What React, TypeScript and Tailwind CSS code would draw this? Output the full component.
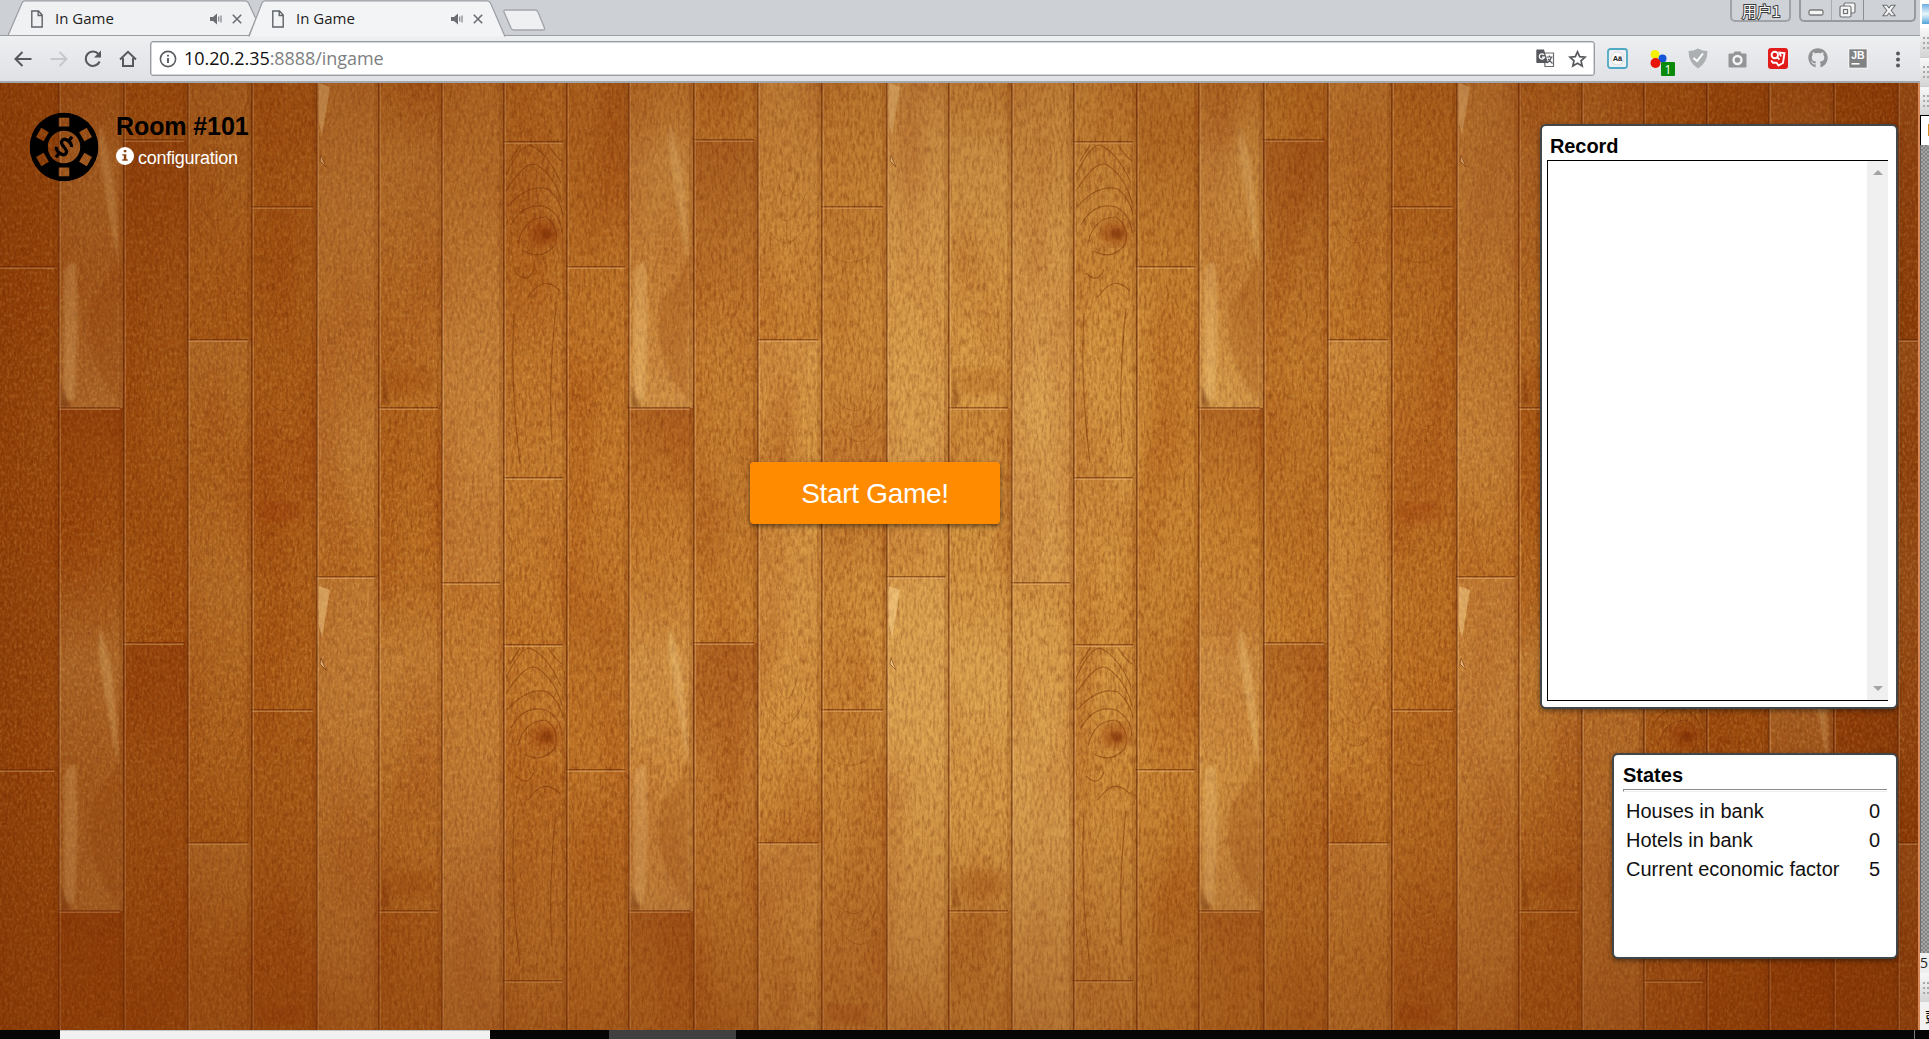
import React from "react";
import { FaGithub } from "react-icons/fa";

const SANS = "font-['Liberation_Sans',Arial,sans-serif]";
const UI = "font-['Open_Sans','Noto_Sans','Noto_Sans_CJK_SC',sans-serif]";

/* One repeat of the parquet is 570 x 503: nine boards, each with its end joints.
   Tones run from a board's top end to its bottom end, as [colour, opacity] stops. */
type Stop = [string, number];
const BOARDS: { x: number; w: number; joints: number[]; stops: Stop[] }[] = [
  { x: 0, w: 65, joints: [325], stops: [["#7a2400", 0.3], ["#9a4000", 0.1], ["#ffe6a0", 0.18], ["#ffe0a0", 0.1], ["#ffe6a0", 0.2]] },
  { x: 65, w: 64, joints: [57], stops: [["#7a2400", 0.26], ["#7a2400", 0.12], ["#8a3400", 0.1], ["#8a3400", 0.16], ["#b05400", 0.06]] },
  { x: 129, w: 64, joints: [257], stops: [["#ffe0a0", 0.12], ["#ffd890", 0.04], ["#ffd890", 0.12], ["#ffd890", 0.06], ["#a04400", 0.06]] },
  { x: 193, w: 65, joints: [124], stops: [["#8a3400", 0.12], ["#8a3400", 0.1], ["#8a2400", 0.14], ["#8a3400", 0.06], ["#a04400", 0.06]] },
  { x: 258, w: 62, joints: [494], stops: [["#ffe0a0", 0.14], ["#ffe0a0", 0.16], ["#ffe0a0", 0.1], ["#ffe0a0", 0.14], ["#ffd080", 0.06]] },
  { x: 320, w: 63, joints: [325], stops: [["#8a3400", 0.14], ["#8a3400", 0.04], ["#ffe6a0", 0.14], ["#ffe6a0", 0.06], ["#ffe6a0", 0.02]] },
  { x: 383, w: 62, joints: [500], stops: [["#ffe2a8", 0.06], ["#ffe2a8", 0.1], ["#ffe2a8", 0.14], ["#ffe2a8", 0.14], ["#ffe2a8", 0.12]] },
  { x: 445, w: 63, joints: [59], stops: [["#ffe2a8", 0.02], ["#a04400", 0.06], ["#ffe2a8", 0.04], ["#ffe2a8", 0.04], ["#a04400", 0.04]] },
  { x: 508, w: 62, joints: [184], stops: [["#a04400", 0.06], ["#a04400", 0.1], ["#a04400", 0.08], ["#8a3400", 0.14], ["#a04400", 0.1]] },
];

function WoodFloor() {
  return (
    <svg className="absolute inset-0 h-full w-full" viewBox="0 0 1920 947" preserveAspectRatio="none">
      <defs>
        <linearGradient id="tone" x1="0" x2="1" y1="0" y2="0">
          <stop offset="0" stopColor="#95460b" />
          <stop offset=".04" stopColor="#a35210" />
          <stop offset=".12" stopColor="#af6118" />
          <stop offset=".25" stopColor="#bd7124" />
          <stop offset=".36" stopColor="#c98232" />
          <stop offset=".46" stopColor="#d49540" />
          <stop offset=".54" stopColor="#d59843" />
          <stop offset=".62" stopColor="#cc8935" />
          <stop offset=".74" stopColor="#bf7526" />
          <stop offset=".86" stopColor="#ab5b15" />
          <stop offset=".95" stopColor="#9a490c" />
          <stop offset="1" stopColor="#8f3f08" />
        </linearGradient>
        <radialGradient id="edge" cx=".5" cy=".5" r=".62">
          <stop offset=".45" stopColor="#6a2400" stopOpacity="0" />
          <stop offset="1" stopColor="#6a2400" stopOpacity=".25" />
        </radialGradient>
        <linearGradient id="ends" x1="0" x2="0" y1="0" y2="1">
          <stop offset="0" stopColor="#7a2c00" stopOpacity=".1" />
          <stop offset=".3" stopColor="#7a2c00" stopOpacity="0" />
          <stop offset=".7" stopColor="#7a2c00" stopOpacity="0" />
          <stop offset="1" stopColor="#7a2c00" stopOpacity=".24" />
        </linearGradient>
        {BOARDS.map((b, i) => (
          <linearGradient key={b.x} id={`board${i}`} x1="0" x2="0" y1="0" y2="1">
            {b.stops.map(([color, alpha], k) => (
              <stop key={k} offset={k / 4} stopColor={color} stopOpacity={alpha} />
            ))}
          </linearGradient>
        ))}
        <filter id="grain" x="0" y="0" width="1" height="1" colorInterpolationFilters="sRGB">
          <feTurbulence type="fractalNoise" baseFrequency=".36 .11" numOctaves="3" seed="4" />
          <feColorMatrix values="0 0 0 0 .42  0 0 0 0 .14  0 0 0 0 0  1.3 0 0 0 -.5" />
        </filter>
        <filter id="flecks" x="0" y="0" width="1" height="1" colorInterpolationFilters="sRGB">
          <feTurbulence type="fractalNoise" baseFrequency=".4 .26" numOctaves="2" seed="21" />
          <feColorMatrix values="0 0 0 0 1  0 0 0 0 .82  0 0 0 0 .45  0 1.3 0 0 -.56" />
        </filter>
        <filter id="clouds" x="0" y="0" width="1" height="1" colorInterpolationFilters="sRGB">
          <feTurbulence type="fractalNoise" baseFrequency=".02 .006" numOctaves="2" seed="9" />
          <feColorMatrix values="0 0 0 0 .58  0 0 0 0 .2  0 0 0 0 0  1.6 0 0 0 -.7" />
        </filter>
        <filter id="soft"><feGaussianBlur stdDeviation="6" /></filter>
        <filter id="blur2"><feGaussianBlur stdDeviation="1.6" /></filter>
        <pattern id="boards" x="58" y="0" width="570" height="503" patternUnits="userSpaceOnUse">
          {BOARDS.map((b, i) => (
            <g key={b.x}>
              <rect x={b.x} y={b.joints[0] - 503} width={b.w} height="503" fill={`url(#board${i})`} />
              <rect x={b.x} y={b.joints[0]} width={b.w} height="503" fill={`url(#board${i})`} />
              {(i === 7 ? [59, 395] : b.joints).map((j) => (
                <g key={j}>
                  <rect x={b.x} y={j - 1} width={b.w - 3} height="1.5" fill="#5a1e00" opacity=".5" />
                  <rect x={b.x} y={j + 0.5} width={b.w - 3} height="1.5" fill="#f0b878" opacity=".45" />
                </g>
              ))}
              <rect x={b.x} y="0" width="1.6" height="503" fill="#5c2000" opacity=".6" />
              <rect x={b.x + 1.6} y="0" width="1.4" height="503" fill="#f5c490" opacity=".3" />
              <rect x={b.x + b.w - 4} y="0" width="4" height="503" fill="#6a2800" opacity=".16" />
            </g>
          ))}
          <g filter="url(#blur2)">
            <path d="M6 315V190Q8 178 18 180Q22 240 16 318Z" fill="#ffdc90" opacity=".28" />
            <path d="M60 318Q20 270 34 215Q62 190 60 150Z" fill="#8a3200" opacity=".22" />
            <path d="M42 40Q60 90 60 180Q48 120 40 60Z" fill="#ffdf98" opacity=".26" />
          </g>
          <path d="M261 496V503M261 0L272 4L264 52L261 40Z" fill="#ffdc98" opacity=".45" />
          <path d="M263 72L268 84L262 78Z" fill="#ffe0a8" opacity=".6" stroke="#6a2800" strokeWidth=".8" />
          <g fill="none" stroke="#6a2600" strokeWidth="1.200" opacity=".45">
            <path d="M448 92Q462 62 472 62Q490 70 503 100M448 108Q470 72 482 84Q498 96 504 120M449 124Q470 100 490 106Q502 116 505 132M453 142Q466 118 488 124Q503 132 504 150M460 160Q466 134 488 134Q502 144 497 162Q484 178 466 168" />
            <path d="M452 78L462 62M490 62Q498 74 504 78M458 190Q470 202 476 186M470 214Q486 190 502 208M456 230Q452 300 462 380M498 225Q490 300 494 360" />
          </g>
          <ellipse cx="487" cy="150" rx="14" ry="12" fill="#8a2c00" opacity=".5" filter="url(#soft)" />
          <ellipse cx="489" cy="151" rx="6" ry="5" fill="#6a2000" opacity=".4" filter="url(#blur2)" />
          <g fill="none" stroke="#6a2600" strokeWidth=".9" opacity=".28">
            <path d="M200 170Q222 190 246 168M202 310Q232 350 248 300M206 326Q232 364 250 320M212 344Q232 374 252 342" />
            <path d="M136 140Q160 185 184 130M142 120Q160 160 178 110M150 100Q160 130 170 90" />
          </g>
          <path d="M324 322V280L332 320Z" fill="#6a2200" opacity=".35" filter="url(#blur2)" />
          <path d="M3 324V300L12 324Z" fill="#5a1a00" opacity=".4" filter="url(#blur2)" />
          <rect x="330" y="285" width="46" height="26" fill="#8a3000" opacity=".22" filter="url(#soft)" />
          <rect x="200" y="420" width="42" height="18" fill="#8a1f00" opacity=".22" filter="url(#soft)" />
        </pattern>
      </defs>
      <rect width="1920" height="947" fill="url(#tone)" />
      <rect width="1920" height="947" filter="url(#clouds)" opacity=".5" />
      <rect width="1920" height="947" filter="url(#grain)" opacity=".7" />
      <rect width="1920" height="947" filter="url(#flecks)" opacity=".5" />
      <rect width="1920" height="947" fill="url(#boards)" />
      <rect width="1920" height="947" fill="url(#edge)" />
      <rect width="1920" height="947" fill="url(#ends)" />
      <rect x="1918" width="2" height="947" fill="#d98a5c" />
    </svg>
  );
}

function Tab({ width, path, fill }: { width: number; path: string; fill: string }) {
  return (
    <div className="relative h-9 shrink-0" style={{ width }}>
      <svg className="absolute left-0 top-0 overflow-visible" width={width} height="36">
        <path d={path} fill={fill} stroke="#9a9da2" strokeWidth="1.2" />
      </svg>
      <div className="relative flex h-9 items-center pl-[23px] pt-[2px]">
        <svg width="12" height="18" viewBox="0 0 12 18" fill="none" stroke="#5f6368" strokeWidth="1.4">
          <path d="M.8 1H7.5L11.2 5V17H.8ZM7.2 1V5.5H11" />
        </svg>
        <span className="-mt-[2px] ml-[12px] w-[154px] text-[15px] leading-5 text-[#222]">In Game</span>
        <svg className="ml-px" width="12" height="12" viewBox="0 0 12 12" fill="#6a6d71">
          <path d="M0 4H3L7 .5V11.500L3 8H0ZM8.300 3.500H9.300V8.500H8.300ZM10.500 2.500H11.500V9.500H10.500Z" />
        </svg>
        <svg className="ml-[10px]" width="10" height="10" viewBox="0 0 10 10" stroke="#6a6d71" strokeWidth="1.6">
          <path d="M.8 .8L9.200 9.200M9.200 .8L.8 9.200" />
        </svg>
      </div>
    </div>
  );
}

function TabStrip() {
  return (
    <div className="flex h-9 items-start border-b border-[#9a9da2] bg-[#cdd0d5]">
      <div className="w-2 shrink-0" />
      <Tab width={241} fill="#f0f1f3" path="M0 35.500L14 3Q15 .8 17 .8H237Q239.500 .8 240.500 3L248 19L241 35.500Z" />
      <div className="z-10 -mr-4 flex">
        <Tab width={257} fill="#f3f4f5" path="M0 36.500L13 3Q14 .8 16 .8H238Q240.500 .8 241.500 3L256 36.500" />
      </div>
      <svg className="ml-[13px] mt-[9px] shrink-0" width="43" height="22" viewBox="0 0 43 22">
        <path d="M2.500 1H32Q34 1 35 3L41.500 19Q42 21 40 21H11Q9 21 8 19L1 3Q.5 1 2.500 1Z" fill="#eff0f2" stroke="#a3a6ab" strokeWidth="1.400" />
      </svg>
      <div className="ml-auto mr-[4px] flex items-start">
        <div className="relative mr-2 flex h-[22px] w-[61px] items-center justify-center rounded-b-[5px] border-2 border-t-0 border-[#a0a3a8] bg-[#cfd2d6]">
          <svg width="38" height="20" className="overflow-visible">
            <text x="0" y="17" className="font-['Noto_Sans_CJK_SC',sans-serif] text-[15px]" fill="#fff" stroke="#3c3c3c" strokeWidth="2" paintOrder="stroke">用户1</text>
          </svg>
        </div>
        <div className="flex h-[22px] w-[117px] rounded-b-[5px] border-2 border-t-0 border-[#979a9f] bg-[#cfd2d6]">
          <div className="flex w-[31px] items-center justify-center border-r border-[#a9acb0] pt-1">
            <svg width="16" height="7"><rect x="1" y="1" width="14" height="5" rx="1.500" fill="#f5f5f5" stroke="#77797c" strokeWidth="1.300" /></svg>
          </div>
          <div className="flex w-[32px] items-center justify-center border-r border-[#8b8e92]">
            <svg width="17" height="16" fill="#f5f5f5" stroke="#707275" strokeWidth="1.200">
              <rect x="5" y="1" width="11" height="10" rx="1.500" />
              <rect x="1" y="4" width="11" height="11" rx="1.500" />
              <rect x="4.500" y="7.500" width="4" height="4" />
            </svg>
          </div>
          <div className="flex flex-1 items-center justify-center">
            <svg width="14" height="13" viewBox="0 0 16 14">
              <path d="M1 1H5.500L8 4L10.500 1H15L10.500 7L15 13H10.500L8 10L5.500 13H1L5.500 7Z" fill="#f5f5f5" stroke="#707275" strokeWidth="1.200" />
            </svg>
          </div>
        </div>
      </div>
    </div>
  );
}

function Extensions() {
  return (
    <>
      <svg className="absolute left-[1607px] top-[12px]" width="21" height="21">
        <rect x="1" y="1" width="19" height="19" rx="2.500" fill="#eef1f3" stroke="#4fa9c4" strokeWidth="1.800" />
        <circle cx="10.500" cy="10.500" r="6.500" fill="#fafafa" stroke="#ddd" />
        <text x="10.500" y="13.300" textAnchor="middle" className="font-['Liberation_Sans',sans-serif] text-[7.500px] font-bold" fill="#222">Aä</text>
      </svg>
      <svg className="absolute left-[1649px] top-[13px]" width="28" height="28">
        <circle cx="6" cy="5.500" r="4.500" fill="#f3f000" />
        <circle cx="13.500" cy="9.500" r="4" fill="#1553d8" />
        <circle cx="6.500" cy="14" r="5" fill="#e81505" />
        <rect x="12" y="13" width="14" height="14" rx="1" fill="#0a8a0a" />
        <text x="19" y="24.500" textAnchor="middle" className="font-['Open_Sans',sans-serif] text-[12px]" fill="#fff">1</text>
      </svg>
      <svg className="absolute left-[1688px] top-[12px]" width="20" height="21" viewBox="0 0 20 21">
        <path d="M10 .5Q14.500 3 19.500 3Q19.500 15 10 20.500Q.5 15 .5 3Q5.500 3 10 .5Z" fill="#adb0b2" />
        <path d="M5.500 10L9 13L15 5.500" fill="none" stroke="#fff" strokeWidth="2" />
      </svg>
      <svg className="absolute left-[1728px] top-[15px]" width="19" height="17" viewBox="0 0 19 17">
        <path d="M1.500 2.500H5.500L6.500 .5H12.500L13.500 2.500H17.500Q18.500 2.500 18.500 3.500V15.500Q18.500 16.500 17.500 16.500H1.500Q.5 16.500 .5 15.500V3.500Q.5 2.500 1.500 2.500Z" fill="#939597" />
        <circle cx="9.500" cy="9" r="4" fill="#939597" stroke="#f4f4f4" strokeWidth="2.400" />
      </svg>
      <svg className="absolute left-[1768px] top-[12px]" width="20" height="21" viewBox="0 0 20 21">
        <rect width="20" height="21" rx="3" fill="#e21b1b" />
        <g fill="none" stroke="#fff" strokeWidth="1.900">
          <circle cx="6.800" cy="7" r="3.200" />
          <path d="M9 9L11.500 11.500M3.200 12.500L5 14.800L8.500 14.800L10.500 17.500L15 15L16.500 5L11.500 4.500L13 8.500" />
        </g>
      </svg>
      <FaGithub className="absolute left-[1808px] top-[12px] h-5 w-5 text-[#909294]" />
      <svg className="absolute left-[1848px] top-[12px]" width="20" height="21" viewBox="0 0 20 21">
        <rect x=".7" y=".7" width="18.600" height="19.600" fill="#808284" stroke="#f4f4f4" strokeWidth="1.200" />
        <text x="10" y="11" textAnchor="middle" className="font-['Liberation_Sans',sans-serif] text-[10.500px] font-bold" fill="#fff">JB</text>
        <rect x="3.500" y="15" width="8" height="1.600" fill="#fff" />
      </svg>
      <svg className="absolute left-[1895px] top-[15px]" width="6" height="18" fill="#55585c">
        <circle cx="3" cy="2.500" r="2" /><circle cx="3" cy="8.500" r="2" /><circle cx="3" cy="14.500" r="2" />
      </svg>
    </>
  );
}

function Toolbar() {
  return (
    <div className="relative flex h-[47px] items-center border-b-2 border-[#a3a8ae] bg-linear-to-b from-[#eeeff1] to-[#dfe1e5]">
      <svg className="ml-[14px]" width="18" height="16" fill="none" stroke="#55585c" strokeWidth="2">
        <path d="M17.500 8H1.800M8.500 1L1.500 8L8.500 15" />
      </svg>
      <svg className="ml-[18px]" width="18" height="16" fill="none" stroke="#c6c8cb" strokeWidth="2">
        <path d="M.5 8H16.200M9.500 1L16.500 8L9.500 15" />
      </svg>
      <svg className="ml-[16px]" width="18" height="18" fill="none" stroke="#55585c" strokeWidth="2.100">
        <path d="M14.500 4.200A7.200 7.200 0 1 0 15.600 11.500" />
        <path d="M17 .5V7.500H10Z" fill="#55585c" stroke="none" />
      </svg>
      <svg className="ml-[17px]" width="18" height="18" fill="none" stroke="#55585c" strokeWidth="2">
        <path d="M1 9.500L9 1.800L17 9.500M4 8V16H14V8" />
      </svg>
      <div className="relative ml-[13px] flex h-[35px] w-[1445px] items-center rounded-[3px] border border-[#999ca0] bg-white shadow-[inset_0_0_0_0.500px_#a8abb0]">
        <svg className="ml-[8px]" width="18" height="18" fill="none" stroke="#5a5d61">
          <circle cx="9" cy="9" r="7.600" strokeWidth="1.600" />
          <path d="M9 8V13M9 4.800V6.600" strokeWidth="1.900" />
        </svg>
        <span className="-mt-px ml-[7px] text-[18px] leading-6 tracking-[-0.060px] text-[#111]">
          10.20.2.35<span className="text-[#7d7f82]">:8888/ingame</span>
        </span>
        <svg className="ml-auto" width="19" height="19" viewBox="0 0 19 19">
          <path d="M8 4H17.500V17.500H9Z" fill="#fff" stroke="#6a6d71" strokeWidth="1.200" />
          <path d="M1 .5H8L12 14H1Q.3 14 .3 13V1.500Q.3 .5 1 .5Z" fill="#55585c" />
          <path d="M8 5.800A2.600 2.600 0 1 0 8.400 8.200H6" fill="none" stroke="#fff" strokeWidth="1.300" />
          <path d="M10.500 8H16.500M13.500 6.500V8M15.500 8Q14.500 12 11 14M12 10L16.500 14.500" fill="none" stroke="#55585c" strokeWidth="1.200" />
        </svg>
        <svg className="ml-[13px] mr-[7px]" width="19" height="18" viewBox="0 0 19 18">
          <path d="M9.500 1.800L11.700 6.700L17 7.200L13 10.800L14.200 16L9.500 13.300L4.800 16L6 10.800L2 7.200L7.300 6.700Z" fill="none" stroke="#55585c" strokeWidth="1.700" />
        </svg>
      </div>
      <Extensions />
    </div>
  );
}

function PokerChip() {
  return (
    <svg width="70" height="70" viewBox="-35 -35 70 70">
      <defs>
        <mask id="chip">
          <circle r="34.500" fill="#fff" />
          {[0, 60, 120, 180, 240, 300].map((a) => (
            <rect key={a} x="-5.300" y="-29.300" width="10.600" height="8.800" fill="#000" transform={`rotate(${a})`} />
          ))}
          <circle r="16.200" fill="#000" />
        </mask>
      </defs>
      <circle r="34.500" mask="url(#chip)" />
      <g transform="rotate(38)" fill="none" stroke="#000" strokeWidth="3.300">
        <path d="M5.800 -4.500Q4 -7.500 0 -7.500Q-5.500 -7.500 -5.500 -4Q-5.500 -.8 0 0Q5.500 1 5.500 4Q5.500 7.500 0 7.500Q-4.500 7.500 -6 4.500M0 -13V-7.500M0 7.500V13" />
      </g>
    </svg>
  );
}

function RecordPanel() {
  return (
    <section className="h-[585px] w-[358px] rounded-[6px] border-2 border-[#424648] bg-white pl-[5px] pt-[6px] shadow-[0_2px_5px_rgba(0,0,0,0.450)]">
      <h2 className="h-[28px] pl-[3px] pt-px text-[20px] font-bold leading-[26px] tracking-[-0.100px] text-black">Record</h2>
      <div className="flex h-[541px] w-[341px] justify-end border-y border-l border-black">
        <div className="flex w-[21px] flex-col items-center justify-between bg-[#f0f0f0] py-[9px]">
          <svg width="10" height="5"><path d="M0 5L5 0L10 5Z" fill="#a3a3a3" /></svg>
          <svg width="10" height="5"><path d="M0 0H10L5 5Z" fill="#a3a3a3" /></svg>
        </div>
      </div>
    </section>
  );
}

const STATES: [string, number][] = [
  ["Houses in bank", 0],
  ["Hotels in bank", 0],
  ["Current economic factor", 5],
];

function StatesPanel() {
  return (
    <section className="mt-[44px] h-[206px] w-[286px] rounded-[6px] border-2 border-[#424648] bg-white px-[9px] pt-[7px] shadow-[0_2px_5px_rgba(0,0,0,0.450)]">
      <h2 className="h-[27px] text-[20px] font-bold leading-[26px] text-black">States</h2>
      <div className="mb-[4px] h-[3px] border-b border-l border-t border-b-[#eee] border-l-[#8d8d8d] border-t-[#8d8d8d]" />
      {STATES.map(([label, value]) => (
        <div key={label} className="flex h-[29px] items-center justify-between pl-[3px] pr-[7px] text-[20px] text-[#111]">
          <span>{label}</span>
          <span>{value}</span>
        </div>
      ))}
    </section>
  );
}

function Game() {
  return (
    <main className={`relative h-[947px] overflow-hidden ${SANS}`}>
      <WoodFloor />
      <div className="relative flex h-full">
        <header className="flex h-fit w-[750px] items-start pl-[28.500px] pt-[28.500px]">
          <PokerChip />
          <div className="ml-[17.500px]">
            <h1 className="text-[25px] font-bold leading-[28px] tracking-[-0.100px] text-black">Room #101</h1>
            <div className="flex items-center text-white">
              <svg className="-mt-[2px]" width="18" height="18" viewBox="0 0 18 18">
                <circle cx="9" cy="9" r="9" fill="#fff" />
                <path d="M7.800 3H10.300V5.200H7.800ZM6.300 7.200H10.300V12.300H11.700V13.800H6.300V12.300H7.800V8.600H6.300Z" fill="#8a4210" />
              </svg>
              <span className="ml-[4px] mt-[2px] text-[18px] leading-[33px] tracking-[-0.250px]">configuration</span>
            </div>
          </div>
        </header>
        <button className="mt-[379px] h-[62px] w-[250px] rounded-[4px] bg-[#ff8c00] pt-[2px] text-[28px] tracking-[-0.300px] text-white shadow-[0_2px_5px_rgba(0,0,0,0.500)]">
          Start Game!
        </button>
        <aside className="ml-auto mr-[22px] flex flex-col items-end pt-[41px]">
          <RecordPanel />
          <StatesPanel />
        </aside>
      </div>
    </main>
  );
}

function Grip({ className }: { className: string }) {
  return (
    <div className={`flex items-center justify-end bg-linear-to-b from-[#f8f8f8] to-[#d4d4d4] ${className}`}>
      <svg width="6" height="12" fill="#a8a8a8">
        <path d="M0 0h2v2h-2zM4 0h2v2h-2zM0 5h2v2h-2zM4 5h2v2h-2zM0 10h2v2h-2zM4 10h2v2h-2z" />
      </svg>
    </div>
  );
}

function BackgroundWindow() {
  return (
    <div className={`flex h-[1030px] w-[9px] flex-col overflow-hidden bg-white ${UI}`}>
      <div className="h-[28px] pl-[2px] pt-1">
        <div className="h-5 bg-linear-to-b from-[#6fb0e4] via-[#e9f6fd] to-[#4aa5d8]" />
      </div>
      <Grip className="h-[29px]" />
      <Grip className="h-[29px] border-t border-[#ccc]" />
      <Grip className="h-[29px] border-t border-[#ccc]" />
      <div className="flex h-[30px] justify-end border-l border-t border-black bg-white pt-2">
        <div className="h-3 w-px bg-[#d98a1c]" />
      </div>
      <div className="h-[808px] border-l border-[#6b6b6b] bg-[#8e8e8e] bg-[repeating-conic-gradient(#a4a4a4_0_25%,#848484_0_50%)] bg-[length:4px_4px]" />
      <div className="h-[20px] whitespace-nowrap bg-[#eeeeee] text-[14px] leading-5 text-[#222]">5</div>
      <Grip className="h-[29px]" />
      <div className="h-[28px] overflow-hidden whitespace-nowrap bg-[#f2f2f2] pl-[5px] text-[15px] leading-7 text-black">彭</div>
    </div>
  );
}

function Taskbar() {
  return (
    <div className={`flex h-[9px] overflow-hidden bg-[#060606] text-white ${UI}`}>
      <div className="w-[60px]" />
      <div className="w-[430px] border-t border-[#c4c4c4] bg-[#f1f1f1]" />
      <div className="w-[119px]" />
      <div className="w-[127px] bg-[#404040]" />
      <div className="ml-auto mr-[88px] pt-[3px] text-[15px] leading-5">17:39</div>
      <div className="mr-[14px] w-px bg-[#777]" />
    </div>
  );
}

export default function App() {
  return (
    <div className="h-[1039px] w-[1929px] overflow-hidden bg-black">
      <div className="flex">
        <div className={`flex h-[1030px] w-[1920px] flex-col ${UI}`}>
          <TabStrip />
          <Toolbar />
          <Game />
        </div>
        <BackgroundWindow />
      </div>
      <Taskbar />
    </div>
  );
}
